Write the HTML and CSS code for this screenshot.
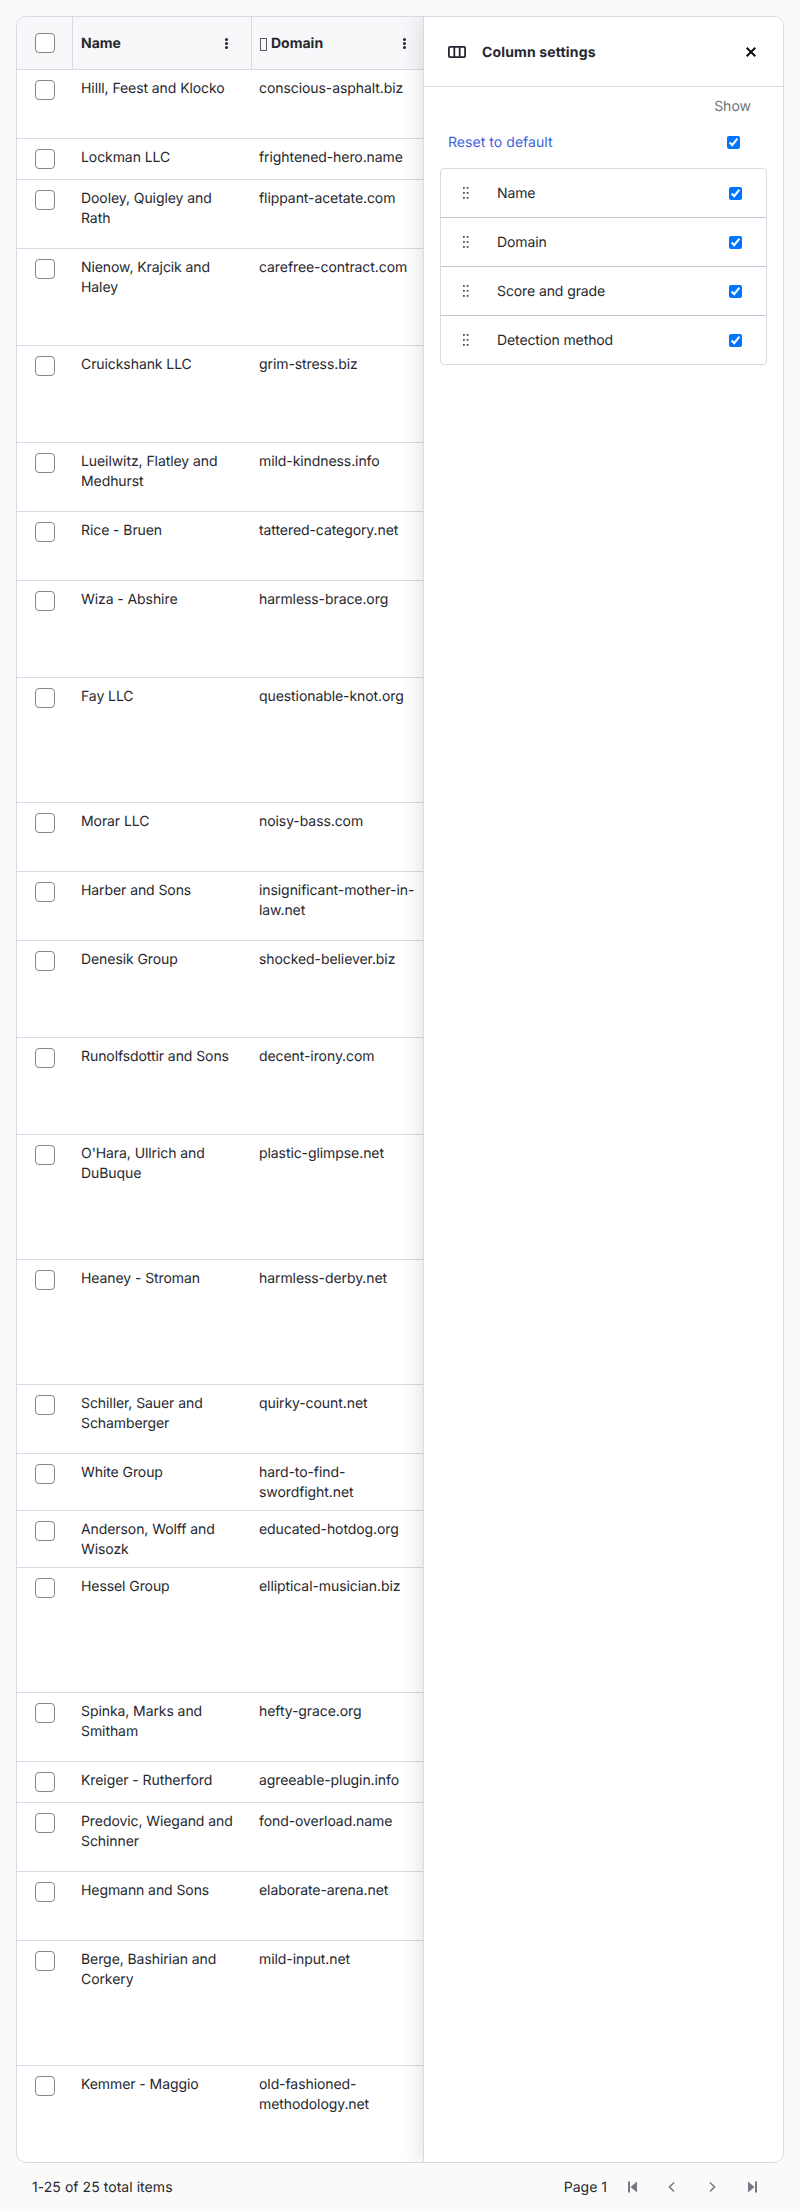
FILE: index.html
```html
<!DOCTYPE html>
<html lang="en">
<head>
<meta charset="utf-8">
<title>Companies</title>
<link rel="stylesheet" href="styles.css">
</head>
<body>
<main class="card">
  <section class="table">
    <div class="row head">
      <div class="cell check-cell"><span class="box"></span></div>
      <div class="cell th name-col"><span class="th-label">Name</span><span class="kebab"><i></i><i></i><i></i></span></div>
      <div class="cell th domain-col"><span class="th-label"><span class="tofu"></span>Domain</span><span class="kebab"><i></i><i></i><i></i></span></div>
    </div>
    <div class="row h69"><div class="cell check-cell"><span class="box"></span></div><div class="cell">Hilll, Feest and Klocko</div><div class="cell">conscious-asphalt.biz</div></div>
    <div class="row h41"><div class="cell check-cell"><span class="box"></span></div><div class="cell">Lockman LLC</div><div class="cell">frightened-hero.name</div></div>
    <div class="row h69"><div class="cell check-cell"><span class="box"></span></div><div class="cell">Dooley, Quigley and Rath</div><div class="cell">flippant-acetate.com</div></div>
    <div class="row h97"><div class="cell check-cell"><span class="box"></span></div><div class="cell">Nienow, Krajcik and Haley</div><div class="cell">carefree-contract.com</div></div>
    <div class="row h97"><div class="cell check-cell"><span class="box"></span></div><div class="cell">Cruickshank LLC</div><div class="cell">grim-stress.biz</div></div>
    <div class="row h69"><div class="cell check-cell"><span class="box"></span></div><div class="cell">Lueilwitz, Flatley and Medhurst</div><div class="cell">mild-kindness.info</div></div>
    <div class="row h69"><div class="cell check-cell"><span class="box"></span></div><div class="cell">Rice - Bruen</div><div class="cell">tattered-category.net</div></div>
    <div class="row h97"><div class="cell check-cell"><span class="box"></span></div><div class="cell">Wiza - Abshire</div><div class="cell">harmless-brace.org</div></div>
    <div class="row h125"><div class="cell check-cell"><span class="box"></span></div><div class="cell">Fay LLC</div><div class="cell">questionable-knot.org</div></div>
    <div class="row h69"><div class="cell check-cell"><span class="box"></span></div><div class="cell">Morar LLC</div><div class="cell">noisy-bass.com</div></div>
    <div class="row h69"><div class="cell check-cell"><span class="box"></span></div><div class="cell">Harber and Sons</div><div class="cell">insignificant-mother-in-law.net</div></div>
    <div class="row h97"><div class="cell check-cell"><span class="box"></span></div><div class="cell">Denesik Group</div><div class="cell">shocked-believer.biz</div></div>
    <div class="row h97"><div class="cell check-cell"><span class="box"></span></div><div class="cell">Runolfsdottir and Sons</div><div class="cell">decent-irony.com</div></div>
    <div class="row h125"><div class="cell check-cell"><span class="box"></span></div><div class="cell">O'Hara, Ullrich and DuBuque</div><div class="cell">plastic-glimpse.net</div></div>
    <div class="row h125"><div class="cell check-cell"><span class="box"></span></div><div class="cell">Heaney - Stroman</div><div class="cell">harmless-derby.net</div></div>
    <div class="row h69"><div class="cell check-cell"><span class="box"></span></div><div class="cell">Schiller, Sauer and Schamberger</div><div class="cell">quirky-count.net</div></div>
    <div class="row h57"><div class="cell check-cell"><span class="box"></span></div><div class="cell">White Group</div><div class="cell">hard-to-find-swordfight.net</div></div>
    <div class="row h57"><div class="cell check-cell"><span class="box"></span></div><div class="cell">Anderson, Wolff and Wisozk</div><div class="cell">educated-hotdog.org</div></div>
    <div class="row h125"><div class="cell check-cell"><span class="box"></span></div><div class="cell">Hessel Group</div><div class="cell">elliptical-musician.biz</div></div>
    <div class="row h69"><div class="cell check-cell"><span class="box"></span></div><div class="cell">Spinka, Marks and Smitham</div><div class="cell">hefty-grace.org</div></div>
    <div class="row h41"><div class="cell check-cell"><span class="box"></span></div><div class="cell">Kreiger - Rutherford</div><div class="cell">agreeable-plugin.info</div></div>
    <div class="row h69"><div class="cell check-cell"><span class="box"></span></div><div class="cell">Predovic, Wiegand and Schinner</div><div class="cell">fond-overload.name</div></div>
    <div class="row h69"><div class="cell check-cell"><span class="box"></span></div><div class="cell">Hegmann and Sons</div><div class="cell">elaborate-arena.net</div></div>
    <div class="row h125"><div class="cell check-cell"><span class="box"></span></div><div class="cell">Berge, Bashirian and Corkery</div><div class="cell">mild-input.net</div></div>
    <div class="row last"><div class="cell check-cell"><span class="box"></span></div><div class="cell">Kemmer - Maggio</div><div class="cell">old-fashioned-methodology.net</div></div>
  </section>
  <aside class="panel">
    <header class="panel-head">
      <svg class="columns-icon" width="18" height="12" viewBox="0 0 18 12" fill="none" stroke="#23262f" stroke-width="1.8"><rect x="0.9" y="0.9" width="16.2" height="10.2" rx="1"/><path d="M6.3 1v10M11.7 1v10"/></svg>
      <h2 class="panel-title">Column settings</h2>
      <svg class="close-icon" width="10" height="10" viewBox="0 0 10 10" fill="none" stroke="#111" stroke-width="2"><path d="M0.7 0.7l8.6 8.6M9.3 0.7l-8.6 8.6"/></svg>
    </header>
    <div class="panel-body">
      <div class="show-label">Show</div>
      <div class="reset-row"><a class="reset">Reset to default</a><input type="checkbox" checked></div>
      <ul class="col-list">
        <li class="col-item"><svg class="grip" width="6" height="12" viewBox="0 0 6 12" fill="#50535d"><rect x="0" y="0" width="1.8" height="1.8"/><rect x="3.7" y="0" width="1.8" height="1.8"/><rect x="0" y="5" width="1.8" height="1.8"/><rect x="3.7" y="5" width="1.8" height="1.8"/><rect x="0" y="10" width="1.8" height="1.8"/><rect x="3.7" y="10" width="1.8" height="1.8"/></svg><span class="col-name">Name</span><input type="checkbox" checked></li>
        <li class="col-item"><svg class="grip" width="6" height="12" viewBox="0 0 6 12" fill="#50535d"><rect x="0" y="0" width="1.8" height="1.8"/><rect x="3.7" y="0" width="1.8" height="1.8"/><rect x="0" y="5" width="1.8" height="1.8"/><rect x="3.7" y="5" width="1.8" height="1.8"/><rect x="0" y="10" width="1.8" height="1.8"/><rect x="3.7" y="10" width="1.8" height="1.8"/></svg><span class="col-name">Domain</span><input type="checkbox" checked></li>
        <li class="col-item"><svg class="grip" width="6" height="12" viewBox="0 0 6 12" fill="#50535d"><rect x="0" y="0" width="1.8" height="1.8"/><rect x="3.7" y="0" width="1.8" height="1.8"/><rect x="0" y="5" width="1.8" height="1.8"/><rect x="3.7" y="5" width="1.8" height="1.8"/><rect x="0" y="10" width="1.8" height="1.8"/><rect x="3.7" y="10" width="1.8" height="1.8"/></svg><span class="col-name">Score and grade</span><input type="checkbox" checked></li>
        <li class="col-item"><svg class="grip" width="6" height="12" viewBox="0 0 6 12" fill="#50535d"><rect x="0" y="0" width="1.8" height="1.8"/><rect x="3.7" y="0" width="1.8" height="1.8"/><rect x="0" y="5" width="1.8" height="1.8"/><rect x="3.7" y="5" width="1.8" height="1.8"/><rect x="0" y="10" width="1.8" height="1.8"/><rect x="3.7" y="10" width="1.8" height="1.8"/></svg><span class="col-name">Detection method</span><input type="checkbox" checked></li>
      </ul>
    </div>
  </aside>
</main>
<footer class="footer">
  <span class="count">1-25 of 25 total items</span>
  <nav class="pager">
    <span class="page">Page 1</span>
    <svg class="pg" width="12" height="12" viewBox="0 0 12 12" fill="#777a85"><rect x="2" y="0.5" width="2" height="11"/><path d="M11 0.5v11L4.5 6z"/></svg>
    <svg class="pg" width="12" height="12" viewBox="0 0 12 12" fill="none" stroke="#777a85" stroke-width="1.6"><path d="M8 1.5L3.5 6L8 10.5"/></svg>
    <svg class="pg" width="12" height="12" viewBox="0 0 12 12" fill="none" stroke="#777a85" stroke-width="1.6"><path d="M4 1.5L8.5 6L4 10.5"/></svg>
    <svg class="pg" width="12" height="12" viewBox="0 0 12 12" fill="#777a85"><rect x="9" y="0.5" width="2" height="11"/><path d="M2 0.5v11L8.5 6z"/></svg>
  </nav>
</footer>
</body>
</html>
```
FILE: styles.css
```css
* { box-sizing: border-box; }
html, body { margin: 0; padding: 0; }
body {
  background: #fafafa;
  color: #26282f;
  font-family: Inter, "Liberation Sans", sans-serif;
  font-size: 14px;
  line-height: 20px;
  text-rendering: geometricPrecision;
  padding: 16px 16px 0;
}
.card {
  display: flex;
  height: 2147px;
  background: #fff;
  border: 1px solid #d9d9e4;
  border-radius: 10px;
  overflow: hidden;
}
.table { width: 406px; flex: none; }
.row {
  display: grid;
  grid-template-columns: 56px 179px 171px;
  border-bottom: 1px solid #d9d9e4;
}
.h41 { min-height: 41px; }
.h57 { min-height: 57px; }
.h69 { min-height: 69px; }
.h97 { min-height: 97px; }
.h125 { min-height: 125px; }
.last { min-height: 96px; border-bottom: 0; }
.cell { padding: 9px 12px 7px 8px; overflow-wrap: break-word; letter-spacing: -0.08px; }
.cell:last-child { padding-left: 7px; padding-right: 5px; }
.check-cell { padding: 10px 0 10px 18px; }
.box {
  display: block;
  width: 20px;
  height: 20px;
  background: #fff;
  border: 1px solid #85858c;
  border-radius: 4px;
}
.head { background: #f8f8fb; height: 53px; }
.head .cell { display: flex; align-items: center; height: 52px; padding-top: 0; padding-bottom: 0; letter-spacing: 0; }
.head .check-cell { padding: 0 0 0 18px; border-right: 1px solid #d9d9e4; }
.th { justify-content: space-between; font-weight: 700; border-right: 1px solid #d9d9e4; }
.head .domain-col { border-right: 0; padding-right: 17px; }
.head .name-col { padding-right: 23px; }
.th-label { display: flex; align-items: center; padding-top: 2px; }
.tofu {
  display: block;
  width: 7px;
  height: 13px;
  margin: 0 4px 0 1px;
  border: 1px solid #55575f;
}
.kebab { display: flex; flex-direction: column; gap: 1px; }
.kebab i { display: block; width: 3px; height: 3px; border-radius: 50%; background: #26282f; }
.panel {
  width: 360px;
  flex: none;
  background: #fff;
  border-left: 1px solid #d9d9e4;
  box-shadow: -4px 0 18px rgba(30, 30, 60, .12);
  position: relative;
}
.panel-head {
  display: flex;
  align-items: center;
  height: 70px;
  padding: 0 27px 0 24px;
  border-bottom: 1px solid #d9d9e4;
}
.panel-title { flex: 1; margin: 0 0 0 16px; padding-top: 2px; font-size: 14px; font-weight: 700; line-height: 20px; letter-spacing: 0.15px; }
.panel-body { padding: 10px 16px 0; }
.show-label { text-align: right; padding-right: 16px; color: #6f7179; }
.reset-row {
  display: flex;
  align-items: center;
  justify-content: space-between;
  margin-top: 14px;
  padding: 0 27px 0 8px;
}
.reset { color: #3e63dd; padding-top: 2px; letter-spacing: 0.05px; }
input[type="checkbox"] { width: 13px; height: 13px; margin: 0; flex: none; }
.col-list {
  list-style: none;
  margin: 15px 0 0;
  padding: 0;
  border: 1px solid #d9d9e4;
  border-radius: 4px;
}
.col-item {
  display: flex;
  align-items: center;
  height: 49px;
  padding: 0 24px 0 22px;
  border-bottom: 1px solid #c4c4d0;
}
.col-item:last-child { border-bottom: 0; height: 48px; }
.col-name { flex: 1; margin-left: 28px; padding-top: 2px; letter-spacing: -0.1px; }
.footer {
  display: flex;
  align-items: center;
  justify-content: space-between;
  height: 48px;
  padding: 0 26px 0 16px;
}
.count { padding-top: 2px; letter-spacing: 0.05px; }
.pager { display: flex; align-items: center; }
.page { margin-right: 19px; padding-top: 2px; }
.pg { margin-right: 28px; }
.pg:last-child { margin-right: 0; }
```
